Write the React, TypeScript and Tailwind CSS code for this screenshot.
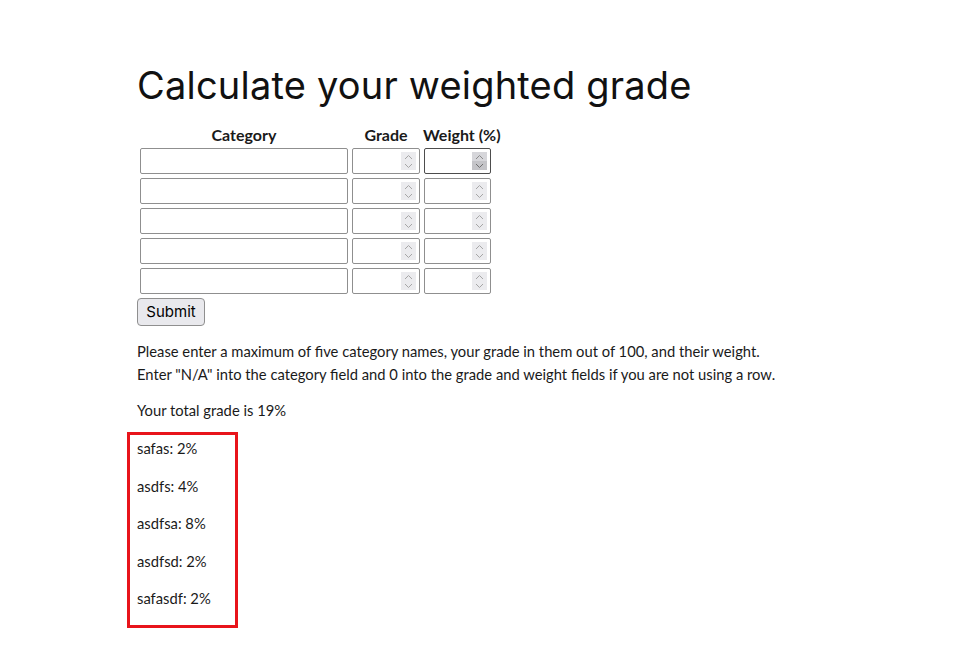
import { useState } from "react";

type Row = {
  category: string;
  grade: string;
  weight: string;
};

const results = [
  { name: "safas", value: 2 },
  { name: "asdfs", value: 4 },
  { name: "asdfsa", value: 8 },
  { name: "asdfsd", value: 2 },
  { name: "safasdf", value: 2 },
];

const emptyRows: Row[] = Array.from({ length: 5 }, () => ({
  category: "",
  grade: "",
  weight: "",
}));

// native spin buttons only show on hover in headless chrome, so draw them
function Spinner({ active = false }: { active?: boolean }) {
  return (
    <span
      className={`pointer-events-none absolute top-[4px] right-[4px] flex h-[18px] w-[15px] flex-col ${
        active ? "bg-[#d6d6da]" : "bg-[#ebebee]"
      }`}
    >
      <span className="flex flex-1 items-center justify-center">
        <svg width="9" height="6" viewBox="0 0 9 6" fill="none">
          <path d="M1 5L4.5 1.5L8 5" stroke={active ? "#8a8a8a" : "#a6a6a6"} strokeWidth="1" />
        </svg>
      </span>
      <span className={`flex flex-1 items-center justify-center ${active ? "bg-[#c4c4c8]" : ""}`}>
        <svg width="9" height="6" viewBox="0 0 9 6" fill="none">
          <path d="M1 1L4.5 4.5L8 1" stroke={active ? "#6f6f6f" : "#a6a6a6"} strokeWidth="1" />
        </svg>
      </span>
    </span>
  );
}

function App() {
  const [rows, setRows] = useState<Row[]>(emptyRows);

  const updateRow = (index: number, key: keyof Row, value: string) => {
    setRows((prev) => prev.map((row, i) => (i === index ? { ...row, [key]: value } : row)));
  };

  const inputClass =
    "h-[26px] rounded-[2px] border bg-white px-[2px] text-[13px] text-black outline-none [appearance:textfield] [&::-webkit-inner-spin-button]:appearance-none [&::-webkit-outer-spin-button]:appearance-none";

  return (
    <div className="min-h-screen bg-white pl-[137px] pt-[62px] font-['Lato','Liberation_Sans',sans-serif] text-[#1a1a1a]">
      <h1 className="font-['Inter','Liberation_Sans',sans-serif] text-[38px] leading-[46px] font-normal tracking-[0.2px] text-[#111]">
        Calculate your weighted grade
      </h1>

      <form className="mt-[14px]" onSubmit={(event) => event.preventDefault()}>
        <table className="border-separate border-spacing-[2px]">
          <thead>
            <tr className="text-[16px] leading-[18px] font-bold">
              <th className="h-[21px] p-0 font-bold">Category</th>
              <th className="p-0 font-bold">Grade</th>
              <th className="p-0 font-bold">Weight (%)</th>
            </tr>
          </thead>
          <tbody>
            {rows.map((row, index) => (
              <tr key={index}>
                <td className="p-[1px]">
                  <input
                    type="text"
                    value={row.category}
                    onChange={(e) => updateRow(index, "category", e.target.value)}
                    className={`${inputClass} block w-[208px] border-[#8f8f8f]`}
                  />
                </td>
                <td className="p-[1px]">
                  <div className="relative w-fit">
                    <input
                      type="number"
                      value={row.grade}
                      onChange={(e) => updateRow(index, "grade", e.target.value)}
                      className={`${inputClass} block w-[68px] border-[#8f8f8f]`}
                    />
                    <Spinner />
                  </div>
                </td>
                <td className="p-[1px]">
                  <div className="relative w-fit">
                    <input
                      type="number"
                      value={row.weight}
                      onChange={(e) => updateRow(index, "weight", e.target.value)}
                      className={`${inputClass} block w-[67px] ${
                        index === 0 ? "border-[#4d4d4d]" : "border-[#8f8f8f]"
                      }`}
                    />
                    <Spinner active={index === 0} />
                  </div>
                </td>
              </tr>
            ))}
          </tbody>
        </table>

        <button
          type="submit"
          className="mt-[1px] h-[28px] w-[68px] rounded-[4px] border border-[#8f8f8f] bg-[#e9e9ed] font-['Inter','Liberation_Sans',sans-serif] text-[15px] text-black"
        >
          Submit
        </button>
      </form>

      <div className="mt-[14px] text-[14.75px] leading-[23px]">
        <p>Please enter a maximum of five category names, your grade in them out of 100, and their weight.</p>
        <p>
          Enter "N/A" into the category field and 0 into the grade and weight fields if you are not using a row.
        </p>
      </div>

      <p className="mt-[13px] text-[14.75px] leading-[23px]">Your total grade is 19%</p>

      <div className="-ml-[10px] mt-[10px] w-[111px] border-[3px] border-[#e8141b] px-[7px] pt-[2px] pb-[15px]">
        {results.map((item) => (
          <p key={item.name} className="mt-[14.5px] text-[14.75px] leading-[23px] first:mt-0">
            {item.name}: {item.value}%
          </p>
        ))}
      </div>
    </div>
  );
}

export default App;
